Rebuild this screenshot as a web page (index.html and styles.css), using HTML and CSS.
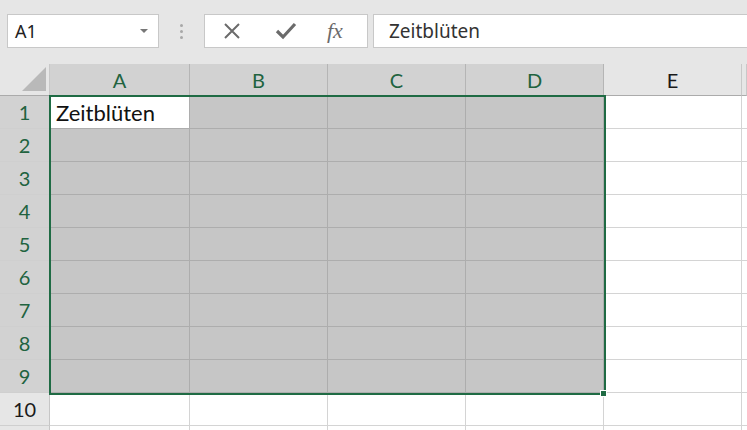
FILE: index.html
```html
<!DOCTYPE html>
<html>
<head>
<meta charset="utf-8">
<link rel="stylesheet" href="styles.css">
</head>
<body>
<div class="toolbar">
  <div class="namebox">
    <span class="name">A1</span>
    <span class="caret"></span>
  </div>
  <div class="dots"><i></i><i></i><i></i></div>
  <div class="buttons">
    <svg class="ico" width="20" height="20" viewBox="0 0 20 20"><path d="M3 3 L17 17 M17 3 L3 17" stroke="#6b6b6b" stroke-width="2" fill="none"/></svg>
    <svg class="ico" width="22" height="20" viewBox="0 0 22 20"><path d="M2 10 L8 16 L20 3" stroke="#6b6b6b" stroke-width="3.2" fill="none" stroke-linejoin="miter"/></svg>
    <span class="fx">fx</span>
  </div>
  <div class="formula">Zeitblüten</div>
</div>

<div class="sheet">
  <div class="row head">
    <div class="c rh corner"><span class="tri"></span></div>
    <div class="c col sel">A</div>
    <div class="c col sel">B</div>
    <div class="c col sel">C</div>
    <div class="c col sel">D</div>
    <div class="c col">E</div>
    <div class="c col last"></div>
  </div>
  <div class="row"><div class="c rh sel">1</div><div class="c active">Zeitblüten</div><div class="c g"></div><div class="c g"></div><div class="c g"></div><div class="c"></div><div class="c last"></div></div>
  <div class="row"><div class="c rh sel">2</div><div class="c g"></div><div class="c g"></div><div class="c g"></div><div class="c g"></div><div class="c"></div><div class="c last"></div></div>
  <div class="row"><div class="c rh sel">3</div><div class="c g"></div><div class="c g"></div><div class="c g"></div><div class="c g"></div><div class="c"></div><div class="c last"></div></div>
  <div class="row"><div class="c rh sel">4</div><div class="c g"></div><div class="c g"></div><div class="c g"></div><div class="c g"></div><div class="c"></div><div class="c last"></div></div>
  <div class="row"><div class="c rh sel">5</div><div class="c g"></div><div class="c g"></div><div class="c g"></div><div class="c g"></div><div class="c"></div><div class="c last"></div></div>
  <div class="row"><div class="c rh sel">6</div><div class="c g"></div><div class="c g"></div><div class="c g"></div><div class="c g"></div><div class="c"></div><div class="c last"></div></div>
  <div class="row"><div class="c rh sel">7</div><div class="c g"></div><div class="c g"></div><div class="c g"></div><div class="c g"></div><div class="c"></div><div class="c last"></div></div>
  <div class="row"><div class="c rh sel">8</div><div class="c g"></div><div class="c g"></div><div class="c g"></div><div class="c g"></div><div class="c"></div><div class="c last"></div></div>
  <div class="row"><div class="c rh sel">9</div><div class="c g"></div><div class="c g"></div><div class="c g"></div><div class="c g"></div><div class="c"></div><div class="c last"></div></div>
  <div class="row"><div class="c rh">10</div><div class="c"></div><div class="c"></div><div class="c"></div><div class="c"></div><div class="c"></div><div class="c last"></div></div>
  <div class="row"><div class="c rh"></div><div class="c"></div><div class="c"></div><div class="c"></div><div class="c"></div><div class="c"></div><div class="c last"></div></div>
  <div class="selection"></div>
  <div class="handle"></div>
</div>
</body>
</html>
```
FILE: styles.css
```css
* { box-sizing: border-box; }
html, body { margin: 0; padding: 0; }
body {
  width: 747px;
  height: 430px;
  overflow: hidden;
  background: #e6e6e6;
  font-family: "Noto Sans", "Open Sans", sans-serif;
}
.toolbar {
  display: flex;
  align-items: center;
  height: 64px;
  padding: 14px 0 16px 7px;
}
.namebox {
  width: 152px;
  height: 34px;
  background: #fff;
  border: 1px solid #c8c8c8;
  display: flex;
  align-items: center;
  justify-content: space-between;
  padding: 0 8px 0 7px;
}
.name { font-size: 18px; color: #222; }
.caret {
  width: 0; height: 0;
  border-left: 4px solid transparent;
  border-right: 4px solid transparent;
  border-top: 4px solid #777;
  margin-right: 2px;
}
.dots {
  width: 45px;
  display: flex;
  flex-direction: column;
  align-items: center;
  gap: 3px;
}
.dots i { width: 3px; height: 3px; border-radius: 50%; background: #a8a8a8; display: block; }
.buttons {
  width: 164px;
  height: 34px;
  background: #fff;
  border: 1px solid #c8c8c8;
  display: flex;
  align-items: center;
  padding-left: 17px;
}
.ico { display: block; }
.buttons .ico:first-child { margin-right: 33px; }
.buttons .ico:nth-child(2) { margin-right: 30px; }
.fx {
  font-family: "Liberation Serif", serif;
  font-style: italic;
  font-size: 22px;
  line-height: 30px;
  color: #6b6b6b;
}
.formula {
  flex: 1;
  height: 34px;
  margin-left: 5px;
  background: #fff;
  border: 1px solid #c8c8c8;
  border-right: none;
  padding-left: 15px;
  font-size: 19px;
  line-height: 32px;
  color: #333;
}
.sheet {
  position: relative;
  background: #fff;
}
.row { display: flex; height: 33px; }
.row.head { height: 32px; }
.c {
  flex: 0 0 138px;
  border-right: 1px solid #d4d4d4;
  border-bottom: 1px solid #d4d4d4;
  font-family: "Lato", "Noto Sans", sans-serif;
}
.c.last { flex: 1 1 auto; border-right: none; }
.rh {
  flex: 0 0 50px;
  background: #e6e6e6;
  border-right: 1px solid #c6c6c6;
  border-bottom: 1px solid #cfcfcf;
  text-align: center;
  font-size: 20px;
  line-height: 33px;
  color: #1a1a1a;
}
.rh.sel { background: #d2d2d2; color: #21633f; }
.row > .c:nth-child(2) { flex-basis: 140px; }
.head .c {
  background: #e6e6e6;
  border-bottom: 1px solid #ababab;
  border-right: 1px solid #c8c8c8;
  text-align: center;
  font-size: 20px;
  line-height: 33px;
  color: #1a1a1a;
}
.head .col.sel { background: #d2d2d2; color: #21633f; border-right-color: #b5b5b5; }
.head .corner { border-bottom-color: #ababab; position: relative; }
.tri {
  position: absolute;
  right: 3px;
  bottom: 4px;
  width: 0; height: 0;
  border-left: 24px solid transparent;
  border-bottom: 24px solid #b9b9b9;
}
.g { background: #c6c6c6; border-right-color: #adadad; border-bottom-color: #adadad; }
.active {
  background: #fff;
  font-size: 22px;
  line-height: 33px;
  padding-left: 6px;
  color: #111;
  border-right-color: #adadad;
  border-bottom-color: #adadad;
}
.selection {
  position: absolute;
  left: 49px;
  top: 31px;
  width: 557px;
  height: 300px;
  border: 2px solid #1f6b44;
  pointer-events: none;
}
.handle {
  position: absolute;
  left: 600px;
  top: 326px;
  width: 7px;
  height: 7px;
  background: #1f6b44;
  border: 1px solid #fff;
}
```
